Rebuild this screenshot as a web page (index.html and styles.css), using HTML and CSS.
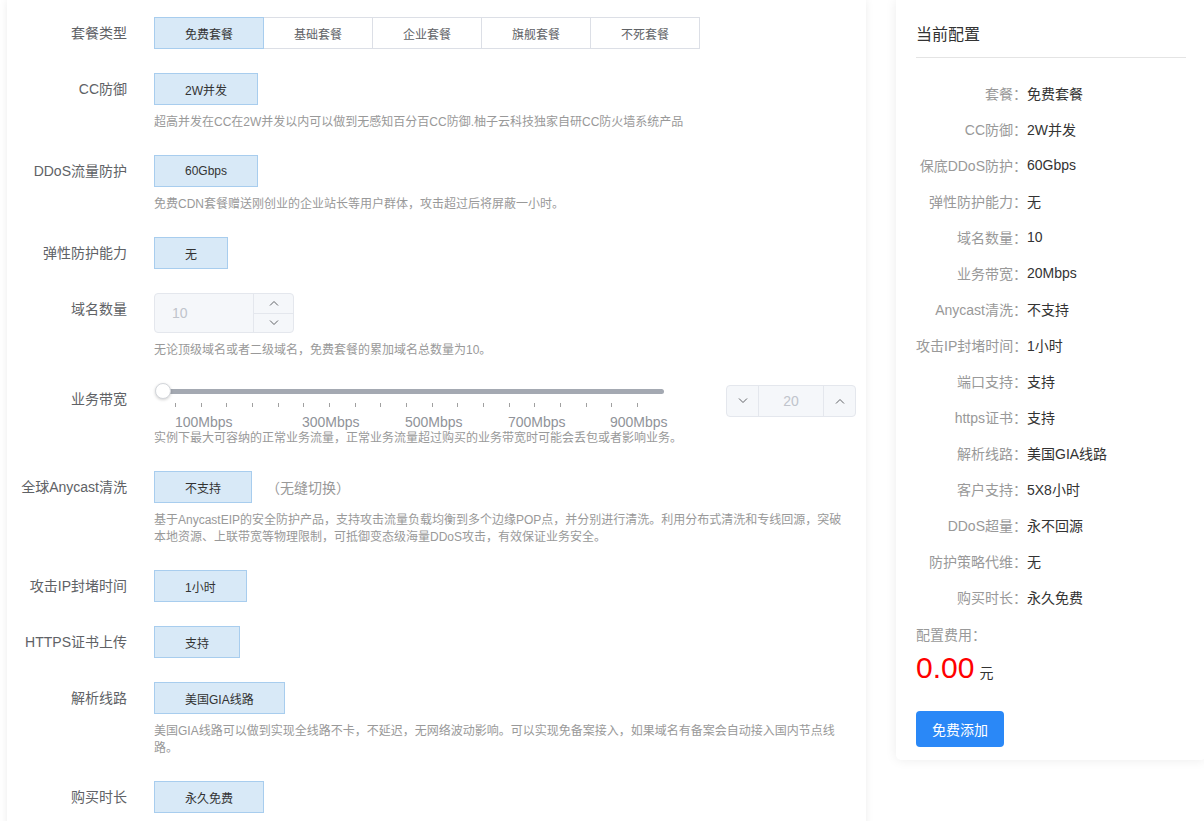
FILE: index.html
```html
<!DOCTYPE html>
<html lang="zh-CN">
<head>
<meta charset="utf-8">
<title>套餐配置</title>
<link rel="stylesheet" href="styles.css">
</head>
<body>
<div class="page">
  <section class="form-card">
    <div class="form-item">
      <div class="item-label">套餐类型</div>
      <div class="item-content">
        <div class="btn-group">
          <span class="opt active">免费套餐</span>
          <span class="opt">基础套餐</span>
          <span class="opt">企业套餐</span>
          <span class="opt">旗舰套餐</span>
          <span class="opt">不死套餐</span>
        </div>
      </div>
    </div>

    <div class="form-item">
      <div class="item-label">CC防御</div>
      <div class="item-content">
        <div class="btn-group"><span class="opt active">2W并发</span></div>
        <p class="desc">超高并发在CC在2W并发以内可以做到无感知百分百CC防御.柚子云科技独家自研CC防火墙系统产品</p>
      </div>
    </div>

    <div class="form-item">
      <div class="item-label">DDoS流量防护</div>
      <div class="item-content">
        <div class="btn-group"><span class="opt active">60Gbps</span></div>
        <p class="desc">免费CDN套餐赠送刚创业的企业站长等用户群体，攻击超过后将屏蔽一小时。</p>
      </div>
    </div>

    <div class="form-item">
      <div class="item-label">弹性防护能力</div>
      <div class="item-content">
        <div class="btn-group"><span class="opt active">无</span></div>
      </div>
    </div>

    <div class="form-item">
      <div class="item-label">域名数量</div>
      <div class="item-content">
        <div class="num-input">
          <span class="num-value">10</span>
          <span class="num-ctrl">
            <span class="num-step"><svg width="10" height="6" viewBox="0 0 10 6"><polyline points="1,5.5 5,1.5 9,5.5" fill="none" stroke="#606266" stroke-width="1"/></svg></span>
            <span class="num-step"><svg width="10" height="6" viewBox="0 0 10 6"><polyline points="1,0.5 5,4.5 9,0.5" fill="none" stroke="#606266" stroke-width="1"/></svg></span>
          </span>
        </div>
        <p class="desc">无论顶级域名或者二级域名，免费套餐的累加域名总数量为10。</p>
      </div>
    </div>

    <div class="form-item">
      <div class="item-label">业务带宽</div>
      <div class="item-content">
        <div class="slider-row">
          <div class="slider">
            <div class="runway"><span class="thumb"></span></div>
            <div class="ticks">
              <i></i><i></i><i></i><i></i><i></i><i></i><i></i><i></i><i></i><i></i><i></i><i></i><i></i><i></i><i></i><i></i><i></i><i></i><i></i>
            </div>
            <div class="marks">
              <span style="left:21px">100Mbps</span>
              <span style="left:148px">300Mbps</span>
              <span style="left:251px">500Mbps</span>
              <span style="left:354px">700Mbps</span>
              <span style="left:456px">900Mbps</span>
            </div>
          </div>
          <div class="num-input-h">
            <span class="num-btn left"><svg width="10" height="6" viewBox="0 0 10 6"><polyline points="1,0.5 5,4.5 9,0.5" fill="none" stroke="#606266" stroke-width="1"/></svg></span>
            <span class="num-mid">20</span>
            <span class="num-btn right"><svg width="10" height="6" viewBox="0 0 10 6"><polyline points="1,5.5 5,1.5 9,5.5" fill="none" stroke="#606266" stroke-width="1"/></svg></span>
          </div>
        </div>
        <p class="desc desc-tight">实例下最大可容纳的正常业务流量，正常业务流量超过购买的业务带宽时可能会丢包或者影响业务。</p>
      </div>
    </div>

    <div class="form-item">
      <div class="item-label">全球Anycast清洗</div>
      <div class="item-content">
        <div class="control-row">
          <div class="btn-group"><span class="opt active">不支持</span></div>
          <span class="note">（无缝切换）</span>
        </div>
        <p class="desc">基于AnycastEIP的安全防护产品，支持攻击流量负载均衡到多个边缘POP点，并分别进行清洗。利用分布式清洗和专线回源，突破本地资源、上联带宽等物理限制，可抵御变态级海量DDoS攻击，有效保证业务安全。</p>
      </div>
    </div>

    <div class="form-item">
      <div class="item-label">攻击IP封堵时间</div>
      <div class="item-content">
        <div class="btn-group"><span class="opt active">1小时</span></div>
      </div>
    </div>

    <div class="form-item">
      <div class="item-label">HTTPS证书上传</div>
      <div class="item-content">
        <div class="btn-group"><span class="opt active">支持</span></div>
      </div>
    </div>

    <div class="form-item">
      <div class="item-label">解析线路</div>
      <div class="item-content">
        <div class="btn-group"><span class="opt active">美国GIA线路</span></div>
        <p class="desc">美国GIA线路可以做到实现全线路不卡，不延迟，无网络波动影响。可以实现免备案接入，如果域名有备案会自动接入国内节点线路。</p>
      </div>
    </div>

    <div class="form-item">
      <div class="item-label">购买时长</div>
      <div class="item-content">
        <div class="btn-group"><span class="opt active">永久免费</span></div>
      </div>
    </div>
  </section>

  <aside class="summary">
    <div class="summary-title">当前配置</div>
    <div class="cfg-list">
      <div class="cfg-row"><span class="cfg-label">套餐：</span><span class="cfg-value">免费套餐</span></div>
      <div class="cfg-row"><span class="cfg-label">CC防御：</span><span class="cfg-value">2W并发</span></div>
      <div class="cfg-row"><span class="cfg-label">保底DDoS防护：</span><span class="cfg-value">60Gbps</span></div>
      <div class="cfg-row"><span class="cfg-label">弹性防护能力：</span><span class="cfg-value">无</span></div>
      <div class="cfg-row"><span class="cfg-label">域名数量：</span><span class="cfg-value">10</span></div>
      <div class="cfg-row"><span class="cfg-label">业务带宽：</span><span class="cfg-value">20Mbps</span></div>
      <div class="cfg-row"><span class="cfg-label">Anycast清洗：</span><span class="cfg-value">不支持</span></div>
      <div class="cfg-row"><span class="cfg-label">攻击IP封堵时间：</span><span class="cfg-value">1小时</span></div>
      <div class="cfg-row"><span class="cfg-label">端口支持：</span><span class="cfg-value">支持</span></div>
      <div class="cfg-row"><span class="cfg-label">https证书：</span><span class="cfg-value">支持</span></div>
      <div class="cfg-row"><span class="cfg-label">解析线路：</span><span class="cfg-value">美国GIA线路</span></div>
      <div class="cfg-row"><span class="cfg-label">客户支持：</span><span class="cfg-value">5X8小时</span></div>
      <div class="cfg-row"><span class="cfg-label">DDoS超量：</span><span class="cfg-value">永不回源</span></div>
      <div class="cfg-row"><span class="cfg-label">防护策略代维：</span><span class="cfg-value">无</span></div>
      <div class="cfg-row"><span class="cfg-label">购买时长：</span><span class="cfg-value">永久免费</span></div>
    </div>
    <div class="fee-label">配置费用：</div>
    <div class="price"><span class="price-num">0.00</span><span class="price-unit">元</span></div>
    <button class="add-btn" type="button">免费添加</button>
  </aside>
</div>
</body>
</html>
```

FILE: styles.css
```css
* { box-sizing: border-box; }
html, body { margin: 0; padding: 0; }
body {
  width: 1204px;
  height: 821px;
  overflow: hidden;
  background: #fff;
  font-family: "Liberation Sans", "Noto Sans CJK SC", sans-serif;
  color: #333;
}
.page {
  display: flex;
  align-items: flex-start;
  gap: 30px;
  padding-left: 7px;
}

/* left form card */
.form-card {
  width: 859px;
  flex: none;
  background: #fff;
  box-shadow: 0 0 8px rgba(0, 0, 0, 0.08);
  padding: 17px 0 40px;
  min-height: 900px;
}
.form-item {
  display: flex;
  align-items: flex-start;
  margin-bottom: 24px;
}
.item-label {
  width: 120px;
  flex: none;
  margin-right: 27px;
  text-align: right;
  font-size: 14px;
  line-height: 32px;
  color: #606266;
  white-space: nowrap;
}
.item-content { flex: 1; min-width: 0; }
.control-row { display: flex; align-items: center; }
.btn-group { display: flex; }
.opt {
  height: 32px;
  padding: 0 30px;
  border: 1px solid #dcdfe6;
  background: #fff;
  font-size: 12px;
  color: #606266;
  display: flex;
  align-items: center;
  justify-content: center;
  white-space: nowrap;
}
.btn-group .opt + .opt { margin-left: -1px; }
.opt.active {
  background: #d8e9f7;
  border-color: #a8cdee;
  color: #333;
  position: relative;
  z-index: 1;
}
.note {
  margin-left: 14px;
  font-size: 14px;
  color: #999;
}
.desc {
  margin: 9px 0 0;
  max-width: 692px;
  font-size: 12px;
  line-height: 17px;
  color: #999;
}
.desc-tight { margin-top: 0; }

/* number input (vertical controls) */
.num-input {
  width: 140px;
  height: 40px;
  border: 1px solid #e4e7ed;
  border-radius: 4px;
  background: #f5f7fa;
  display: flex;
}
.num-value {
  flex: 1;
  padding-left: 17px;
  line-height: 38px;
  font-size: 14px;
  color: #c0c4cc;
}
.num-ctrl {
  width: 40px;
  border-left: 1px solid #e4e7ed;
  display: flex;
  flex-direction: column;
}
.num-step {
  flex: 1;
  display: flex;
  align-items: center;
  justify-content: center;
}
.num-step + .num-step { border-top: 1px solid #e4e7ed; }

/* slider */
.slider-row { display: flex; align-items: flex-start; }
.slider {
  width: 520px;
  margin-right: 52px;
  padding-top: 6px;
}
.runway {
  position: relative;
  height: 5px;
  margin: 0 10px 0 9px;
  background: #a4a9b2;
  border-radius: 3px;
}
.thumb {
  position: absolute;
  left: -8px;
  top: -6px;
  width: 16px;
  height: 16px;
  border-radius: 50%;
  background: #fff;
  border: 1px solid #d3d6db;
  box-shadow: 0 1px 3px rgba(0, 0, 0, 0.18);
}
.ticks {
  display: flex;
  justify-content: space-between;
  width: 463px;
  height: 4px;
  margin: 9px 0 0 21px;
}
.ticks i {
  display: block;
  width: 1px;
  height: 4px;
  background: #a0a0a0;
}
.marks {
  position: relative;
  height: 16px;
  margin-top: 7px;
  font-size: 14px;
  line-height: 16px;
  color: #909399;
}
.marks span { position: absolute; top: 0; white-space: nowrap; }

/* number input (side controls) */
.num-input-h {
  width: 130px;
  height: 32px;
  margin-top: 2px;
  border: 1px solid #e4e7ed;
  border-radius: 4px;
  background: #f5f7fa;
  display: flex;
}
.num-btn {
  width: 32px;
  display: flex;
  align-items: center;
  justify-content: center;
}
.num-btn.left { border-right: 1px solid #e4e7ed; }
.num-btn.right { border-left: 1px solid #e4e7ed; }
.num-mid {
  flex: 1;
  text-align: center;
  line-height: 30px;
  font-size: 14px;
  color: #c0c4cc;
}

/* right summary card */
.summary {
  width: 310px;
  flex: none;
  background: #fff;
  border-radius: 0 0 5px 5px;
  box-shadow: 0 0 12px rgba(0, 0, 0, 0.08);
  padding: 24px 20px 13px;
}
.summary-title {
  font-size: 16px;
  line-height: 22px;
  color: #333;
  padding-bottom: 11px;
  border-bottom: 1px solid #e4e4e4;
  margin-bottom: 17px;
}
.cfg-row {
  display: flex;
  align-items: center;
  height: 36px;
  font-size: 14px;
  white-space: nowrap;
}
.cfg-label {
  width: 111px;
  flex: none;
  text-align: right;
  color: #999;
}
.cfg-value { color: #333; }
.fee-label {
  margin-top: 10px;
  font-size: 14px;
  line-height: 20px;
  color: #999;
}
.price {
  display: flex;
  align-items: baseline;
  margin-top: 5px;
  line-height: 36px;
}
.price-num { font-size: 30px; color: #f00; }
.price-unit { margin-left: 5px; font-size: 14px; color: #333; }
.add-btn {
  display: block;
  margin-top: 20px;
  width: 88px;
  height: 36px;
  border: none;
  border-radius: 4px;
  background: #2a88f7;
  color: #fff;
  font-family: inherit;
  font-size: 14px;
}
```
